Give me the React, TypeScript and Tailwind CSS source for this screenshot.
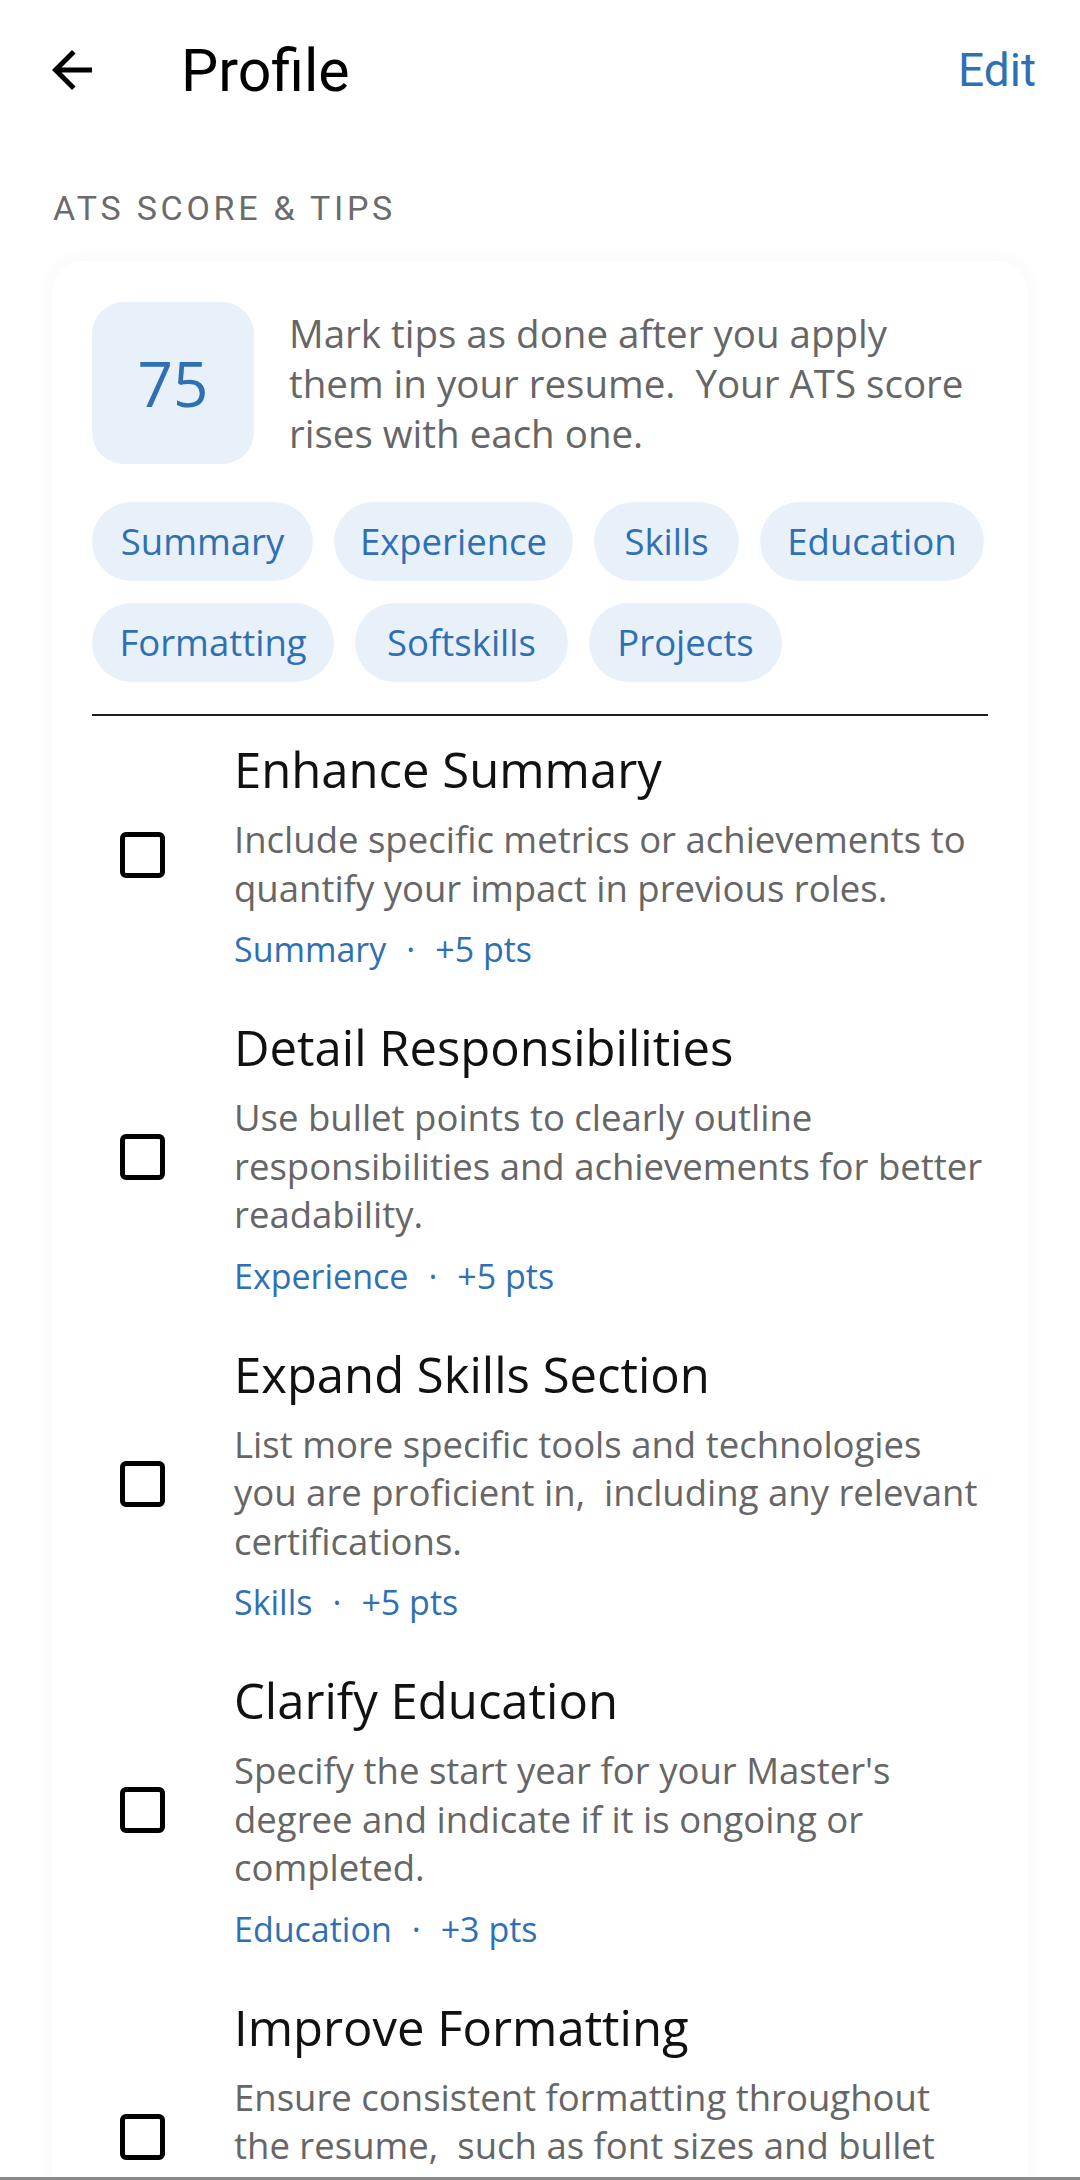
import React from "react";

const tips = [
  {
    title: "Enhance Summary",
    desc: "Include specific metrics or achievements to quantify your impact in previous roles.",
    cat: "Summary",
    pts: "+5 pts",
  },
  {
    title: "Detail Responsibilities",
    desc: "Use bullet points to clearly outline responsibilities and achievements for better readability.",
    cat: "Experience",
    pts: "+5 pts",
  },
  {
    title: "Expand Skills Section",
    desc: "List more specific tools and technologies you are proficient in,\u00a0 including any relevant certifications.",
    cat: "Skills",
    pts: "+5 pts",
  },
  {
    title: "Clarify Education",
    desc: "Specify the start year for your Master's degree and indicate if it is ongoing or completed.",
    cat: "Education",
    pts: "+3 pts",
  },
  {
    title: "Improve Formatting",
    desc: "Ensure consistent formatting throughout the resume,\u00a0 such as font sizes and bullet styles.",
    cat: "Formatting",
    pts: "+4 pts",
  },
];

const chipRows = [
  [
    { label: "Summary", w: "w-[221px]" },
    { label: "Experience", w: "w-[239px]" },
    { label: "Skills", w: "w-[145px]" },
    { label: "Education", w: "w-[224px]" },
  ],
  [
    { label: "Formatting", w: "w-[242px]" },
    { label: "Softskills", w: "w-[213px]" },
    { label: "Projects", w: "w-[193px]" },
  ],
];

function BackArrow() {
  return (
    <svg width="60" height="60" viewBox="0 0 24 24" fill="#000">
      <path d="M20 11H7.83l5.59-5.59L12 4l-8 8 8 8 1.41-1.41L7.83 13H20v-2z" />
    </svg>
  );
}

export default function App() {
  return (
    <div className="w-full h-[2180px] overflow-hidden bg-white flex flex-col font-['Open_Sans',sans-serif]">
      <div className="flex-1 overflow-hidden">
        {/* Header */}
        <div className="h-[142px] flex items-center pl-[42px] pr-[44px] pb-[2px]">
          <BackArrow />
          <div className="ml-[79px] text-[59px] text-black font-['Roboto',sans-serif] leading-none">Profile</div>
          <div className="ml-auto text-[46px] text-[#2f6fb4] font-['Roboto',sans-serif] leading-none">Edit</div>
        </div>

        {/* Section label */}
        <div className="pl-[53px] pt-[44px] text-[34px] tracking-[0.11em] text-[#6b6b6b] font-['Roboto',sans-serif] leading-[44px]">
          ATS SCORE &amp; TIPS
        </div>

        {/* Card */}
        <div className="mx-[52px] mt-[31px] rounded-[30px] bg-white shadow-[0_0_22px_rgba(0,0,0,0.045)] px-[40px] pt-[41px]">
          <div className="flex items-start">
            <div className="w-[162px] h-[162px] shrink-0 rounded-[32px] bg-[#e8f0f9] flex items-center justify-center">
              <span className="text-[62px] text-[#2f6fb4] leading-none">75</span>
            </div>
            <p className="ml-[35px] mt-[6px] text-[38.5px] leading-[50px] text-[#666666] whitespace-nowrap">
              Mark tips as done after you apply
              <br />
              them in your resume.&nbsp; Your ATS score
              <br />
              rises with each one.
            </p>
          </div>

          <div className="mt-[38px] flex flex-col gap-y-[22px]">
            {chipRows.map((row, i) => (
              <div key={i} className="flex gap-x-[21px]">
                {row.map((c) => (
                  <div
                    key={c.label}
                    className={`${c.w} h-[79px] rounded-full bg-[#e8f1fa] flex items-center justify-center text-[36.5px] text-[#2f6fb4] whitespace-nowrap`}
                  >
                    {c.label}
                  </div>
                ))}
              </div>
            ))}
          </div>

          <div className="mt-[32px] h-[2px] bg-[#1f1f1f]" />

          <div className="pt-[23px]">
            {tips.map((t) => (
              <div key={t.title} className="flex items-center mb-[46px]">
                <div className="w-[142px] shrink-0 pl-[28px]">
                  <div className="w-[45px] h-[46px] border-[5px] border-black rounded-[6px]" />
                </div>
                <div className="flex-1">
                  <div className="text-[49px] leading-[60px] text-[#111111]">{t.title}</div>
                  <div className="mt-[16px] text-[36.5px] leading-[48.5px] text-[#666666]">{t.desc}</div>
                  <div className="mt-[15px] text-[34px] leading-[44px] text-[#2f6fb4] flex items-center">
                    <span>{t.cat}</span>
                    <span className="mx-[20px]">·</span>
                    <span>{t.pts}</span>
                  </div>
                </div>
              </div>
            ))}
          </div>
        </div>
      </div>
      <div className="h-[3px] bg-[#8a8a8a]" />
    </div>
  );
}
